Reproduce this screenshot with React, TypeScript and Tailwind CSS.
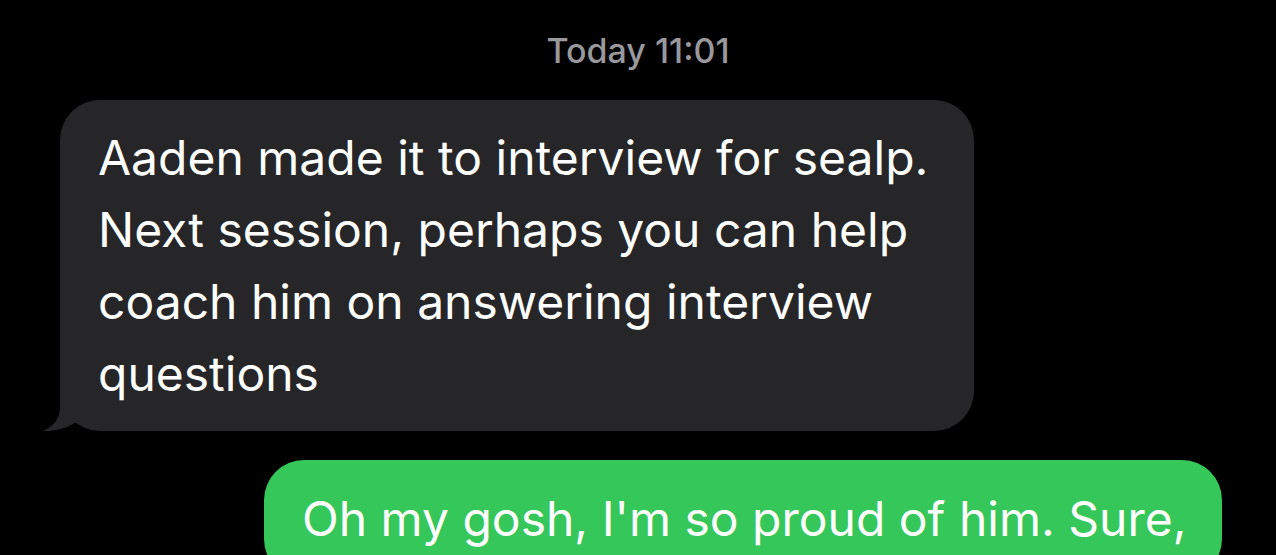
const font = { fontFamily: "Inter, 'Liberation Sans', sans-serif" };

const Tail = () => (
  <svg
    className="absolute bottom-0 left-[-20px]"
    width="62"
    height="50"
    viewBox="0 0 62 50"
  >
    <path
      d="M20,0 L20,26 C20,38 13,46 3,50 C15,50.5 28,47 38,40 C46,46 53,50 62,50 L62,0 Z"
      fill="#262629"
    />
  </svg>
);

const App = () => {
  return (
    <div className="h-[555px] w-full overflow-hidden bg-black" style={font}>
      <div className="flex flex-col">
        <p className="pt-[30px] text-center text-[34px] leading-[42px] font-medium text-[#98989d]">
          Today 11:01
        </p>

        <div className="mt-[28px] pl-[60px]">
          <div className="relative w-[914px] rounded-[40px] bg-[#262629] pl-[38px] pt-[22px] pb-[21px] text-[48px] leading-[72px] text-white whitespace-nowrap">
            <Tail />
            <p className="relative">
              Aaden made it to interview for sealp.
              <br />
              Next session, perhaps you can help
              <br />
              coach him on answering interview
              <br />
              questions
            </p>
          </div>
        </div>

        <div className="mt-[29px] flex justify-end pr-[54px]">
          <div className="w-[958px] rounded-[40px] bg-[#35c759] pl-[38px] pt-[23px] pb-[24px] text-[48px] leading-[72px] text-white whitespace-nowrap">
            <p>Oh my gosh, I'm so proud of him. Sure,</p>
          </div>
        </div>
      </div>
    </div>
  );
};

export default App;
